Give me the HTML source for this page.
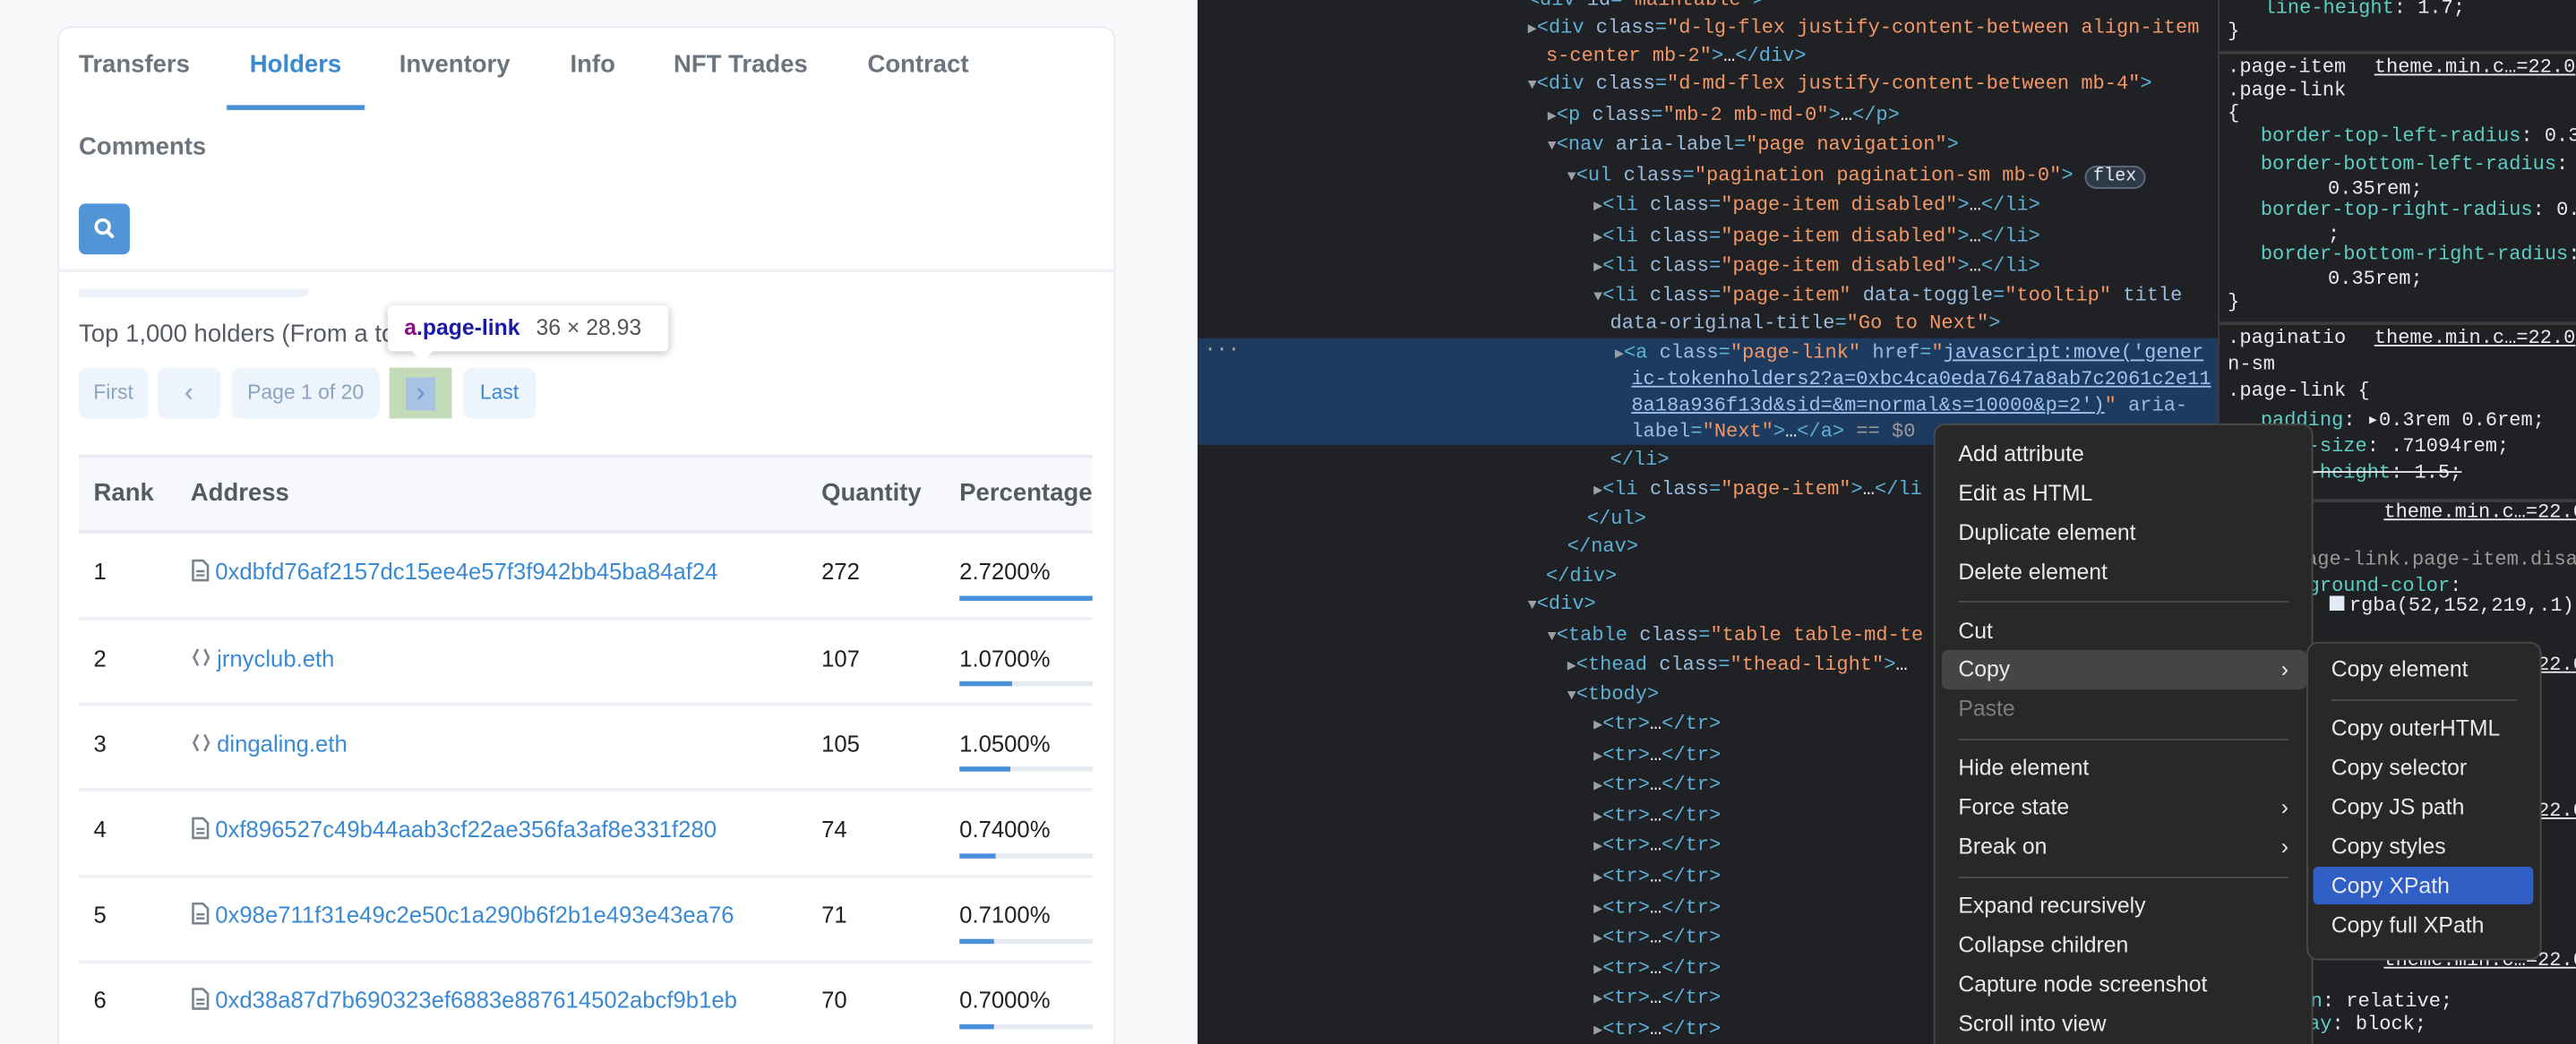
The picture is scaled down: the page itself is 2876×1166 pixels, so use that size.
<!DOCTYPE html>
<html><head><meta charset="utf-8">
<style>
*{margin:0;padding:0;box-sizing:border-box}
html,body{width:2876px;height:1166px;overflow:hidden;background:#202124}
#wrap{position:absolute;left:0;top:0;width:2876px;height:1166px;overflow:hidden}
#s{position:absolute;left:0;top:0;width:1568px;height:636px;overflow:hidden;transform:scale(1.83418,1.83333);transform-origin:0 0;font-family:"Liberation Sans",sans-serif}
.a{position:absolute;white-space:nowrap}
#left{position:absolute;left:0;top:0;width:729px;height:636px;background:#f8f9fb}
#card{position:absolute;left:35px;top:16px;width:644px;height:640px;background:#fff;border:1px solid #e7eaf3;border-radius:8px}
.tab{font-size:15px;font-weight:bold;color:#6c757d;line-height:20px}
.pg{position:absolute;top:224px;height:31px;background:#edf4fc;border-radius:5px;font-size:12.5px;color:#8aa4c0;line-height:31px;text-align:center}
.th{font-size:15px;font-weight:bold;color:#555b63;line-height:20px}
.td{font-size:14px;color:#1e2022;line-height:20px}
.lk{color:#3a8ad3}
.bar{position:absolute;left:584px;width:81px;height:3px;background:#e7eaf3}
.bar i{display:block;height:3px;background:#4a90d9}
.sep{position:absolute;left:48px;width:617px;height:2px;background:#eef0f5}
.ic{display:inline-block;vertical-align:-2px;margin-right:3px}
#dev{position:absolute;left:729px;top:0;width:839px;height:636px;overflow:hidden;background:#202124;font-family:"Liberation Mono",monospace;font-size:12px}
.l{position:absolute;white-space:nowrap;line-height:18px;color:#e8eaed}
.t{color:#5db0d7}.n{color:#9bbbdc}.v{color:#f29766}.g{color:#999}
.p{color:#5ecdc4}
.tri{color:#9aa0a6;font-size:9px}
#menu{position:absolute;left:1177px;top:258px;width:231px;height:390px;background:#282828;border:1px solid #4a4a4a;border-radius:7px;font-family:"Liberation Sans",sans-serif;font-size:13.5px;color:#e8eaed}
#sub{position:absolute;left:1404px;top:391px;width:143px;height:194px;background:#282828;border:1px solid #4a4a4a;border-radius:7px;font-family:"Liberation Sans",sans-serif;font-size:13.5px;color:#e8eaed}
.mi{position:absolute;left:14px;line-height:20px;white-space:nowrap}
.ms{position:absolute;left:14px;right:14px;height:1px;background:#4a4a4a}
.ar{position:absolute;right:14px;line-height:20px}
</style></head><body><div id="wrap"><div id="s">
<div id="left">
 <div id="card"></div>
 <div class="a tab" style="left:48px;top:30px">Transfers</div>
 <div class="a tab" style="left:152px;top:30px;color:#3a8ad3">Holders</div>
 <div style="position:absolute;left:138px;top:64px;width:84px;height:3px;background:#4a90d9"></div>
 <div class="a tab" style="left:243px;top:30px">Inventory</div>
 <div class="a tab" style="left:347px;top:30px">Info</div>
 <div class="a tab" style="left:410px;top:30px">NFT Trades</div>
 <div class="a tab" style="left:528px;top:30px">Contract</div>
 <div class="a tab" style="left:48px;top:80px">Comments</div>
 <div style="position:absolute;left:48px;top:124px;width:31px;height:31px;background:#5195d7;border-radius:4px">
  <svg width="31" height="31" viewBox="0 0 31 31"><circle cx="14.5" cy="14" r="4" fill="none" stroke="#fff" stroke-width="2"/><path d="M17.3 17l3 3" stroke="#fff" stroke-width="2.2" stroke-linecap="round"/></svg></div>
 <div style="position:absolute;left:35px;top:164px;width:644px;height:2px;background:#eef0f5"></div>
 <div style="position:absolute;left:48px;top:176px;width:140px;height:5px;background:#eef3fa;border-radius:0 0 4px 0"></div>
 <div class="a" style="left:48px;top:194px;font-size:15px;color:#555b63;line-height:20px">Top 1,000 holders (From a to</div>
 <div style="position:absolute;left:236px;top:186px;width:171px;height:28px;background:#fff;border-radius:3px;box-shadow:0 1px 5px rgba(0,0,0,.25)"></div>
 <div style="position:absolute;left:250px;top:213px;width:0;height:0;border-left:7px solid transparent;border-right:7px solid transparent;border-top:8px solid #fff"></div>
 <div class="a" style="left:246px;top:191px;font-size:13.5px;line-height:18px;font-weight:bold;color:#1a1aa6"><span style="color:#881280">a</span>.page-link <span style="font-weight:normal;color:#555;margin-left:6px">36 × 28.93</span></div>
 <div class="pg" style="left:48px;width:42px">First</div>
 <div class="pg" style="left:96px;width:38px;font-size:16px">&#x2039;</div>
 <div class="pg" style="left:141px;width:90px">Page 1 of 20</div>
 <div style="position:absolute;left:237px;top:224px;width:38px;height:31px;background:#c3dbb9"></div>
 <div style="position:absolute;left:247px;top:230px;width:18px;height:20px;background:#a6c3e6;color:#5e94d6;text-align:center;line-height:20px;font-size:16px">&#x203A;</div>
 <div class="pg" style="left:282px;width:44px;color:#3a8ad3">Last</div>
 <div style="position:absolute;left:48px;top:277px;width:617px;height:48px;background:#f8f9fd;border-top:2px solid #e7eaf3;border-bottom:2px solid #e7eaf3"></div>
 <div class="a th" style="left:57px;top:291px">Rank</div>
 <div class="a th" style="left:116px;top:291px">Address</div>
 <div class="a th" style="left:500px;top:291px">Quantity</div>
 <div class="a th" style="left:584px;top:291px">Percentage</div>
 <div class="a td" style="left:57px;top:338px">1</div><div class="a td lk" style="left:116px;top:338px"><svg class="ic" width="12" height="15" viewBox="0 0 12 15"><path d="M1.5 1.5h6l3 3v9h-9z" fill="none" stroke="#77838f" stroke-width="1.4" stroke-linejoin="round"/><path d="M3.5 8h5M3.5 10.5h5" stroke="#77838f" stroke-width="1.3"/></svg>0xdbfd76af2157dc15ee4e57f3f942bb45ba84af24</div><div class="a td" style="left:500px;top:338px">272</div><div class="a td" style="left:584px;top:338px">2.7200%</div><div class="bar" style="top:363px"><i style="width:100%"></i></div><div class="sep" style="top:376px"></div>
 <div class="a td" style="left:57px;top:391px">2</div><div class="a td lk" style="left:116px;top:391px"><svg class="ic" width="13" height="15" viewBox="0 0 13 15"><path d="M4.5 2.5L2 7.5l2.5 5M8.5 2.5l2.5 5-2.5 5" fill="none" stroke="#77838f" stroke-width="1.4"/></svg>jrnyclub.eth</div><div class="a td" style="left:500px;top:391px">107</div><div class="a td" style="left:584px;top:391px">1.0700%</div><div class="bar" style="top:415px"><i style="width:39%"></i></div><div class="sep" style="top:428px"></div>
 <div class="a td" style="left:57px;top:443px">3</div><div class="a td lk" style="left:116px;top:443px"><svg class="ic" width="13" height="15" viewBox="0 0 13 15"><path d="M4.5 2.5L2 7.5l2.5 5M8.5 2.5l2.5 5-2.5 5" fill="none" stroke="#77838f" stroke-width="1.4"/></svg>dingaling.eth</div><div class="a td" style="left:500px;top:443px">105</div><div class="a td" style="left:584px;top:443px">1.0500%</div><div class="bar" style="top:467px"><i style="width:38%"></i></div><div class="sep" style="top:480px"></div>
 <div class="a td" style="left:57px;top:495px">4</div><div class="a td lk" style="left:116px;top:495px"><svg class="ic" width="12" height="15" viewBox="0 0 12 15"><path d="M1.5 1.5h6l3 3v9h-9z" fill="none" stroke="#77838f" stroke-width="1.4" stroke-linejoin="round"/><path d="M3.5 8h5M3.5 10.5h5" stroke="#77838f" stroke-width="1.3"/></svg>0xf896527c49b44aab3cf22ae356fa3af8e331f280</div><div class="a td" style="left:500px;top:495px">74</div><div class="a td" style="left:584px;top:495px">0.7400%</div><div class="bar" style="top:520px"><i style="width:27%"></i></div><div class="sep" style="top:533px"></div>
 <div class="a td" style="left:57px;top:547px">5</div><div class="a td lk" style="left:116px;top:547px"><svg class="ic" width="12" height="15" viewBox="0 0 12 15"><path d="M1.5 1.5h6l3 3v9h-9z" fill="none" stroke="#77838f" stroke-width="1.4" stroke-linejoin="round"/><path d="M3.5 8h5M3.5 10.5h5" stroke="#77838f" stroke-width="1.3"/></svg>0x98e711f31e49c2e50c1a290b6f2b1e493e43ea76</div><div class="a td" style="left:500px;top:547px">71</div><div class="a td" style="left:584px;top:547px">0.7100%</div><div class="bar" style="top:572px"><i style="width:26%"></i></div><div class="sep" style="top:585px"></div>
 <div class="a td" style="left:57px;top:599px">6</div><div class="a td lk" style="left:116px;top:599px"><svg class="ic" width="12" height="15" viewBox="0 0 12 15"><path d="M1.5 1.5h6l3 3v9h-9z" fill="none" stroke="#77838f" stroke-width="1.4" stroke-linejoin="round"/><path d="M3.5 8h5M3.5 10.5h5" stroke="#77838f" stroke-width="1.3"/></svg>0xd38a87d7b690323ef6883e887614502abcf9b1eb</div><div class="a td" style="left:500px;top:599px">70</div><div class="a td" style="left:584px;top:599px">0.7000%</div><div class="bar" style="top:624px"><i style="width:26%"></i></div>
</div>
<div id="dev">
 <div style="position:absolute;left:0;top:206px;width:621px;height:65px;background:#1d3a5f"></div>
 <div style="position:absolute;left:621px;top:0;width:1px;height:636px;background:#3c3c3c"></div>
 <div class="l" style="left:4px;top:204px;color:#aaa">···</div>
 <div class="l" style="left:201px;top:-9px"><span class="t">&lt;div</span> <span class="n">id</span><span class="t">=</span><span class="v">"maintable"</span><span class="t">&gt;</span></div>
 <div class="l" style="left:201px;top:8px"><span class="tri">▶</span><span class="t">&lt;div</span> <span class="n">class</span><span class="t">=</span><span class="v">"d-lg-flex justify-content-between align-item</span></div>
 <div class="l" style="left:212px;top:25px"><span class="v">s-center mb-2"</span><span class="t">&gt;</span>…<span class="t">&lt;/div&gt;</span></div>
 <div class="l" style="left:201px;top:42px"><span class="tri">▼</span><span class="t">&lt;div</span> <span class="n">class</span><span class="t">=</span><span class="v">"d-md-flex justify-content-between mb-4"</span><span class="t">&gt;</span></div>
 <div class="l" style="left:213px;top:61px"><span class="tri">▶</span><span class="t">&lt;p</span> <span class="n">class</span><span class="t">=</span><span class="v">"mb-2 mb-md-0"</span><span class="t">&gt;</span>…<span class="t">&lt;/p&gt;</span></div>
 <div class="l" style="left:213px;top:79px"><span class="tri">▼</span><span class="t">&lt;nav</span> <span class="n">aria-label</span><span class="t">=</span><span class="v">"page navigation"</span><span class="t">&gt;</span></div>
 <div class="l" style="left:225px;top:98px"><span class="tri">▼</span><span class="t">&lt;ul</span> <span class="n">class</span><span class="t">=</span><span class="v">"pagination pagination-sm mb-0"</span><span class="t">&gt;</span> <span style="border:1px solid #5f6c7b;border-radius:8px;padding:0 4px;background:#2d3a48;font-size:11px">flex</span></div>
 <div class="l" style="left:241px;top:116px"><span class="tri">▶</span><span class="t">&lt;li</span> <span class="n">class</span><span class="t">=</span><span class="v">"page-item disabled"</span><span class="t">&gt;</span>…<span class="t">&lt;/li&gt;</span></div>
 <div class="l" style="left:241px;top:135px"><span class="tri">▶</span><span class="t">&lt;li</span> <span class="n">class</span><span class="t">=</span><span class="v">"page-item disabled"</span><span class="t">&gt;</span>…<span class="t">&lt;/li&gt;</span></div>
 <div class="l" style="left:241px;top:153px"><span class="tri">▶</span><span class="t">&lt;li</span> <span class="n">class</span><span class="t">=</span><span class="v">"page-item disabled"</span><span class="t">&gt;</span>…<span class="t">&lt;/li&gt;</span></div>
 <div class="l" style="left:241px;top:171px"><span class="tri">▼</span><span class="t">&lt;li</span> <span class="n">class</span><span class="t">=</span><span class="v">"page-item"</span> <span class="n">data-toggle</span><span class="t">=</span><span class="v">"tooltip"</span> <span class="n">title</span></div>
 <div class="l" style="left:251px;top:188px"><span class="n">data-original-title</span><span class="t">=</span><span class="v">"Go to Next"</span><span class="t">&gt;</span></div>
 <div class="l" style="left:254px;top:206px"><span class="tri">▶</span><span class="t">&lt;a</span> <span class="n">class</span><span class="t">=</span><span class="v">"page-link"</span> <span class="n">href</span><span class="t">=</span><span class="v">"</span><span style="color:#9ec3f0;text-decoration:underline">javascript:move('gener</span></div>
 <div class="l" style="left:264px;top:222px"><span style="color:#9ec3f0;text-decoration:underline">ic-tokenholders2?a=0xbc4ca0eda7647a8ab7c2061c2e11</span></div>
 <div class="l" style="left:264px;top:238px"><span style="color:#9ec3f0;text-decoration:underline">8a18a936f13d&amp;sid=&amp;m=normal&amp;s=10000&amp;p=2')</span><span class="v">"</span> <span class="n">aria-</span></div>
 <div class="l" style="left:264px;top:254px"><span class="n">label</span><span class="t">=</span><span class="v">"Next"</span><span class="t">&gt;</span>…<span class="t">&lt;/a&gt;</span> <span class="g">== $0</span></div>
 <div class="l" style="left:251px;top:271px"><span class="t">&lt;/li&gt;</span></div>
 <div class="l" style="left:241px;top:289px"><span class="tri">▶</span><span class="t">&lt;li</span> <span class="n">class</span><span class="t">=</span><span class="v">"page-item"</span><span class="t">&gt;</span>…<span class="t">&lt;/li</span></div>
 <div class="l" style="left:237px;top:307px"><span class="t">&lt;/ul&gt;</span></div>
 <div class="l" style="left:225px;top:324px"><span class="t">&lt;/nav&gt;</span></div>
 <div class="l" style="left:212px;top:342px"><span class="t">&lt;/div&gt;</span></div>
 <div class="l" style="left:201px;top:359px"><span class="tri">▼</span><span class="t">&lt;div&gt;</span></div>
 <div class="l" style="left:213px;top:378px"><span class="tri">▼</span><span class="t">&lt;table</span> <span class="n">class</span><span class="t">=</span><span class="v">"table table-md-te</span></div>
 <div class="l" style="left:225px;top:396px"><span class="tri">▶</span><span class="t">&lt;thead</span> <span class="n">class</span><span class="t">=</span><span class="v">"thead-light"</span><span class="t">&gt;</span>…</div>
 <div class="l" style="left:225px;top:414px"><span class="tri">▼</span><span class="t">&lt;tbody&gt;</span></div>
 <div class="l" style="left:241px;top:432px"><span class="tri">▶</span><span class="t">&lt;tr&gt;</span>…<span class="t">&lt;/tr&gt;</span></div>
 <div class="l" style="left:241px;top:451px"><span class="tri">▶</span><span class="t">&lt;tr&gt;</span>…<span class="t">&lt;/tr&gt;</span></div>
 <div class="l" style="left:241px;top:469px"><span class="tri">▶</span><span class="t">&lt;tr&gt;</span>…<span class="t">&lt;/tr&gt;</span></div>
 <div class="l" style="left:241px;top:488px"><span class="tri">▶</span><span class="t">&lt;tr&gt;</span>…<span class="t">&lt;/tr&gt;</span></div>
 <div class="l" style="left:241px;top:506px"><span class="tri">▶</span><span class="t">&lt;tr&gt;</span>…<span class="t">&lt;/tr&gt;</span></div>
 <div class="l" style="left:241px;top:525px"><span class="tri">▶</span><span class="t">&lt;tr&gt;</span>…<span class="t">&lt;/tr&gt;</span></div>
 <div class="l" style="left:241px;top:544px"><span class="tri">▶</span><span class="t">&lt;tr&gt;</span>…<span class="t">&lt;/tr&gt;</span></div>
 <div class="l" style="left:241px;top:562px"><span class="tri">▶</span><span class="t">&lt;tr&gt;</span>…<span class="t">&lt;/tr&gt;</span></div>
 <div class="l" style="left:241px;top:581px"><span class="tri">▶</span><span class="t">&lt;tr&gt;</span>…<span class="t">&lt;/tr&gt;</span></div>
 <div class="l" style="left:241px;top:599px"><span class="tri">▶</span><span class="t">&lt;tr&gt;</span>…<span class="t">&lt;/tr&gt;</span></div>
 <div class="l" style="left:241px;top:618px"><span class="tri">▶</span><span class="t">&lt;tr&gt;</span>…<span class="t">&lt;/tr&gt;</span></div>
 <div style="position:absolute;left:622px;top:31px;width:217px;height:2px;background:#3c3c3c"></div>
 <div style="position:absolute;left:622px;top:196px;width:217px;height:2px;background:#3c3c3c"></div>
 <div style="position:absolute;left:622px;top:304px;width:217px;height:2px;background:#3c3c3c"></div>
 <div class="l" style="left:649px;top:-4px"><span class="p">line-height</span>: 1.7;</div>
 <div class="l" style="left:627px;top:10px">}</div>
 <div class="l" style="left:627px;top:32px">.page-item <span style="margin-left:10px;text-decoration:underline">theme.min.c…=22.0</span></div>
 <div class="l" style="left:627px;top:46px">.page-link</div>
 <div class="l" style="left:627px;top:60px">{</div>
 <div class="l" style="left:647px;top:74px"><span class="p">border-top-left-radius</span>: 0.35</div>
 <div class="l" style="left:647px;top:91px"><span class="p">border-bottom-left-radius</span>:</div>
 <div class="l" style="left:688px;top:106px">0.35rem;</div>
 <div class="l" style="left:647px;top:119px"><span class="p">border-top-right-radius</span>: 0.</div>
 <div class="l" style="left:688px;top:134px">;</div>
 <div class="l" style="left:647px;top:146px"><span class="p">border-bottom-right-radius</span>:</div>
 <div class="l" style="left:688px;top:161px">0.35rem;</div>
 <div class="l" style="left:627px;top:175px">}</div>
 <div class="l" style="left:627px;top:197px">.paginatio <span style="margin-left:10px;text-decoration:underline">theme.min.c…=22.0</span></div>
 <div class="l" style="left:627px;top:213px">n-sm</div>
 <div class="l" style="left:627px;top:229px">.page-link {</div>
 <div class="l" style="left:647px;top:247px"><span class="p">padding</span>: ▸0.3rem 0.6rem;</div>
 <div class="l" style="left:647px;top:263px"><span class="p">font-size</span>: .71094rem;</div>
 <div class="l" style="left:647px;top:279px;text-decoration:line-through"><span class="p">line-height</span>: 1.5;</div>
 <div class="l" style="left:722px;top:303px;text-decoration:underline">theme.min.c…=22.0</div>
 <div class="l" style="left:660px;top:332px;color:#999">.page-link.page-item.disabled</div>
 <div class="l" style="left:647px;top:348px"><span class="p">background-color</span>:</div>
 <div class="l" style="left:689px;top:360px"><span style="display:inline-block;width:9px;height:9px;background:#e3ecf6;margin-right:3px"></span>rgba(52,152,219,.1)</div>
 <div class="l" style="left:722px;top:396px;text-decoration:underline">theme.min.c…=22.0</div>
 <div class="l" style="left:722px;top:485px;text-decoration:underline">theme.min.c…=22.0</div>
 <div class="l" style="left:722px;top:576px;text-decoration:underline">theme.min.c…=22.0</div>
 <div class="l" style="left:627px;top:601px"><span class="p">position</span>: relative;</div>
 <div class="l" style="left:640px;top:615px"><span class="p">display</span>: block;</div>
</div>
<div id="menu">
 <div class="mi" style="top:8px">Add attribute</div>
 <div class="mi" style="top:32px">Edit as HTML</div>
 <div class="mi" style="top:56px">Duplicate element</div>
 <div class="mi" style="top:80px">Delete element</div>
 <div class="ms" style="top:107px"></div>
 <div class="mi" style="top:116px">Cut</div>
 <div style="position:absolute;left:4px;top:137px;width:222px;height:24px;background:#454545;border-radius:4px"></div>
 <div class="mi" style="top:139px">Copy</div><div class="ar" style="top:139px">›</div>
 <div class="mi" style="top:163px;color:#7d7d7d">Paste</div>
 <div class="ms" style="top:191px"></div>
 <div class="mi" style="top:199px">Hide element</div>
 <div class="mi" style="top:223px">Force state</div><div class="ar" style="top:223px">›</div>
 <div class="mi" style="top:247px">Break on</div><div class="ar" style="top:247px">›</div>
 <div class="ms" style="top:275px"></div>
 <div class="mi" style="top:283px">Expand recursively</div>
 <div class="mi" style="top:307px">Collapse children</div>
 <div class="mi" style="top:331px">Capture node screenshot</div>
 <div class="mi" style="top:355px">Scroll into view</div>
</div>
<div id="sub">
 <div class="mi" style="top:6px">Copy element</div>
 <div class="ms" style="top:34px"></div>
 <div class="mi" style="top:42px">Copy outerHTML</div>
 <div class="mi" style="top:66px">Copy selector</div>
 <div class="mi" style="top:90px">Copy JS path</div>
 <div class="mi" style="top:114px">Copy styles</div>
 <div style="position:absolute;left:3px;top:136px;width:134px;height:23px;background:#2f5fc4;border-radius:3px"></div>
 <div class="mi" style="top:138px">Copy XPath</div>
 <div class="mi" style="top:162px">Copy full XPath</div>
</div>
</div></div></body></html>
